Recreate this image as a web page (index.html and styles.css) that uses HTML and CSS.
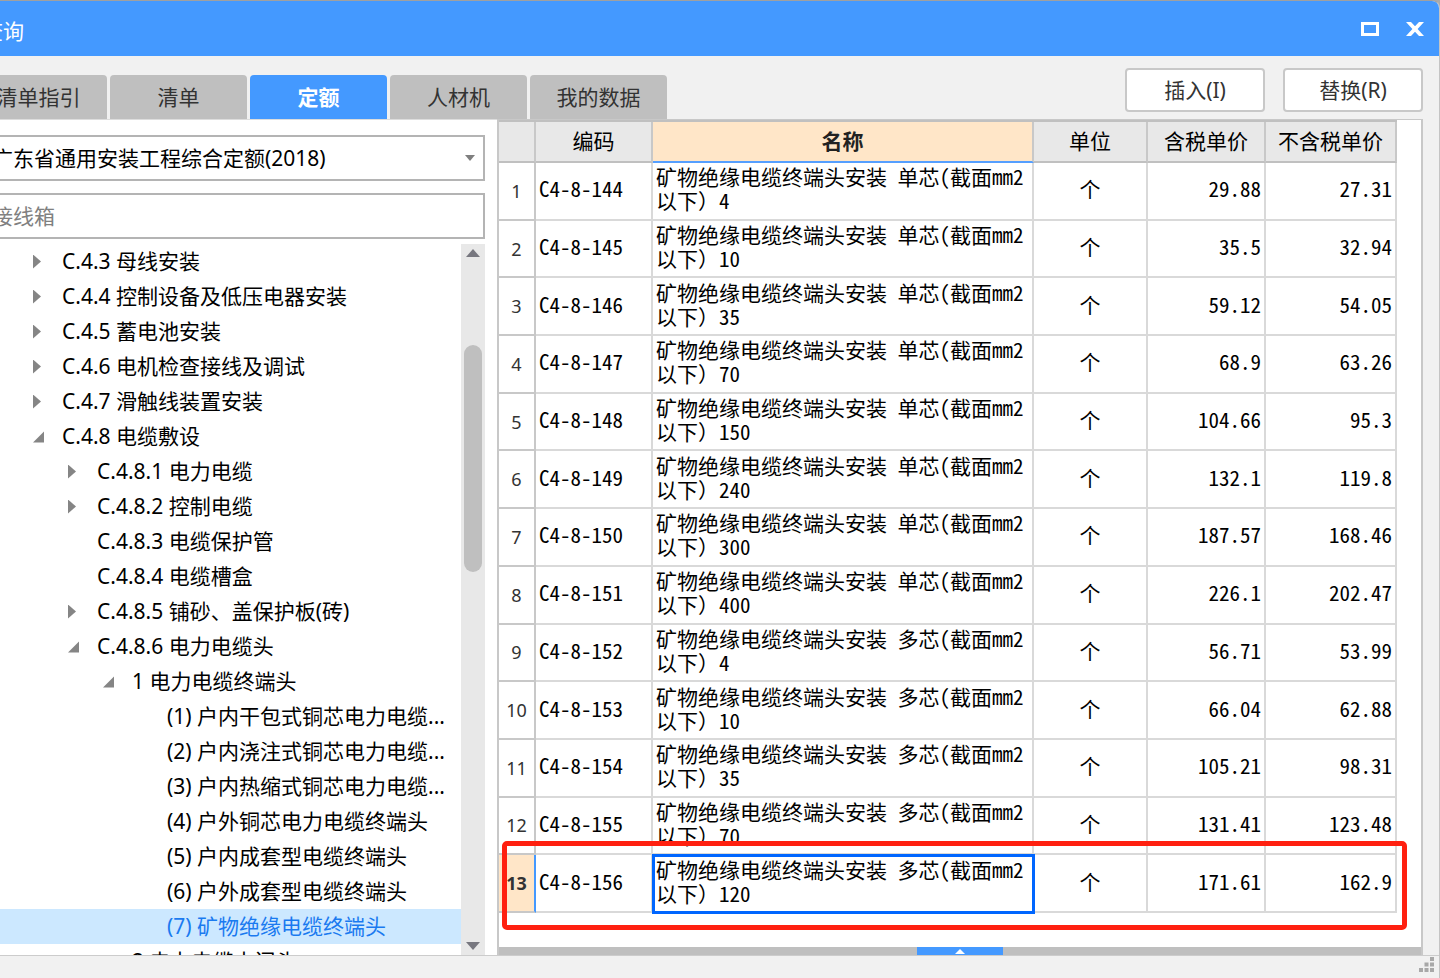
FILE: index.html
```html
<!DOCTYPE html>
<html lang="zh-CN">
<head>
  <meta charset="UTF-8">
  <meta name="viewport" content="width=device-width, initial-scale=1.0">
  <title>查询</title>
  <link rel="stylesheet" href="styles.css">
</head>
<body>
  <div class="query-window">
    <header class="title-bar">
      <h1>查询</h1>
      <div class="window-controls">
        <button type="button" aria-label="最大化">
          <svg width="18" height="14" viewBox="0 0 18 14"><rect x="1.5" y="1.5" width="15" height="11" fill="none" stroke="#fff" stroke-width="3"/></svg>
        </button>
        <button type="button" aria-label="关闭">
          <svg width="18" height="14" viewBox="0 0 18 14"><path d="M0 0H5L9 4.3L13 0H18L11.6 7L18 14H13L9 9.7L5 14H0L6.4 7Z" fill="#fff"/></svg>
        </button>
      </div>
    </header>

    <div class="toolbar">
      <nav class="tabs">
        <button type="button" class="tab">清单指引</button>
        <button type="button" class="tab">清单</button>
        <button type="button" class="tab active">定额</button>
        <button type="button" class="tab">人材机</button>
        <button type="button" class="tab">我的数据</button>
      </nav>
      <div class="actions">
        <button type="button" class="action-button">插入(I)</button>
        <button type="button" class="action-button">替换(R)</button>
      </div>
    </div>

    <main class="content">
      <aside class="sidebar">
        <div class="filters">
          <div class="select-box">
            <select aria-label="定额库">
              <option>广东省通用安装工程综合定额(2018)</option>
            </select>
            <svg class="select-arrow" width="10" height="6" viewBox="0 0 10 6"><path d="M0 0H10L5 6Z" fill="#7f7f7f"/></svg>
          </div>
          <input type="text" class="search-input" aria-label="搜索" placeholder="接线箱">
        </div>
        <div class="tree-box">
          <ul class="tree">
            <li class="level-1 closed">C.4.3 母线安装</li>
            <li class="level-1 closed">C.4.4 控制设备及低压电器安装</li>
            <li class="level-1 closed">C.4.5 蓄电池安装</li>
            <li class="level-1 closed">C.4.6 电机检查接线及调试</li>
            <li class="level-1 closed">C.4.7 滑触线装置安装</li>
            <li class="level-1 open">C.4.8 电缆敷设</li>
            <li class="level-2 closed">C.4.8.1 电力电缆</li>
            <li class="level-2 closed">C.4.8.2 控制电缆</li>
            <li class="level-2">C.4.8.3 电缆保护管</li>
            <li class="level-2">C.4.8.4 电缆槽盒</li>
            <li class="level-2 closed">C.4.8.5 铺砂、盖保护板(砖)</li>
            <li class="level-2 open">C.4.8.6 电力电缆头</li>
            <li class="level-3 open">1 电力电缆终端头</li>
            <li class="level-4">(1) 户内干包式铜芯电力电缆...</li>
            <li class="level-4">(2) 户内浇注式铜芯电力电缆...</li>
            <li class="level-4">(3) 户内热缩式铜芯电力电缆...</li>
            <li class="level-4">(4) 户外铜芯电力电缆终端头</li>
            <li class="level-4">(5) 户内成套型电缆终端头</li>
            <li class="level-4">(6) 户外成套型电缆终端头</li>
            <li class="level-4 selected">(7) 矿物绝缘电缆终端头</li>
            <li class="level-3">2 电力电缆中间头</li>
          </ul>
          <div class="scrollbar">
            <svg width="14" height="8" viewBox="0 0 14 8"><path d="M0 8L7 0L14 8Z" fill="#77777f"/></svg>
            <div class="scroll-track"><div class="scroll-thumb"></div></div>
            <svg width="14" height="8" viewBox="0 0 14 8"><path d="M0 0H14L7 8Z" fill="#77777f"/></svg>
          </div>
        </div>
      </aside>

      <section class="grid-panel">
        <div class="grid-box">
          <table class="quota-table">
            <colgroup>
              <col class="col-index">
              <col class="col-code">
              <col>
              <col class="col-unit">
              <col class="col-price">
              <col class="col-net">
            </colgroup>
            <thead>
              <tr><th></th><th>编码</th><th class="current">名称</th><th>单位</th><th>含税单价</th><th>不含税单价</th></tr>
            </thead>
            <tbody>
              <tr><td class="index">1</td><td class="code">C4-8-144</td><td>矿物绝缘电缆终端头安装<span class="half"> </span>单芯<span class="half">(</span>截面<span class="half">mm2</span><br>以下）<span class="half">4</span></td><td class="unit">个</td><td class="price">29.88</td><td class="price">27.31</td></tr>
              <tr><td class="index">2</td><td class="code">C4-8-145</td><td>矿物绝缘电缆终端头安装<span class="half"> </span>单芯<span class="half">(</span>截面<span class="half">mm2</span><br>以下）<span class="half">10</span></td><td class="unit">个</td><td class="price">35.5</td><td class="price">32.94</td></tr>
              <tr><td class="index">3</td><td class="code">C4-8-146</td><td>矿物绝缘电缆终端头安装<span class="half"> </span>单芯<span class="half">(</span>截面<span class="half">mm2</span><br>以下）<span class="half">35</span></td><td class="unit">个</td><td class="price">59.12</td><td class="price">54.05</td></tr>
              <tr><td class="index">4</td><td class="code">C4-8-147</td><td>矿物绝缘电缆终端头安装<span class="half"> </span>单芯<span class="half">(</span>截面<span class="half">mm2</span><br>以下）<span class="half">70</span></td><td class="unit">个</td><td class="price">68.9</td><td class="price">63.26</td></tr>
              <tr><td class="index">5</td><td class="code">C4-8-148</td><td>矿物绝缘电缆终端头安装<span class="half"> </span>单芯<span class="half">(</span>截面<span class="half">mm2</span><br>以下）<span class="half">150</span></td><td class="unit">个</td><td class="price">104.66</td><td class="price">95.3</td></tr>
              <tr><td class="index">6</td><td class="code">C4-8-149</td><td>矿物绝缘电缆终端头安装<span class="half"> </span>单芯<span class="half">(</span>截面<span class="half">mm2</span><br>以下）<span class="half">240</span></td><td class="unit">个</td><td class="price">132.1</td><td class="price">119.8</td></tr>
              <tr><td class="index">7</td><td class="code">C4-8-150</td><td>矿物绝缘电缆终端头安装<span class="half"> </span>单芯<span class="half">(</span>截面<span class="half">mm2</span><br>以下）<span class="half">300</span></td><td class="unit">个</td><td class="price">187.57</td><td class="price">168.46</td></tr>
              <tr><td class="index">8</td><td class="code">C4-8-151</td><td>矿物绝缘电缆终端头安装<span class="half"> </span>单芯<span class="half">(</span>截面<span class="half">mm2</span><br>以下）<span class="half">400</span></td><td class="unit">个</td><td class="price">226.1</td><td class="price">202.47</td></tr>
              <tr><td class="index">9</td><td class="code">C4-8-152</td><td>矿物绝缘电缆终端头安装<span class="half"> </span>多芯<span class="half">(</span>截面<span class="half">mm2</span><br>以下）<span class="half">4</span></td><td class="unit">个</td><td class="price">56.71</td><td class="price">53.99</td></tr>
              <tr><td class="index">10</td><td class="code">C4-8-153</td><td>矿物绝缘电缆终端头安装<span class="half"> </span>多芯<span class="half">(</span>截面<span class="half">mm2</span><br>以下）<span class="half">10</span></td><td class="unit">个</td><td class="price">66.04</td><td class="price">62.88</td></tr>
              <tr><td class="index">11</td><td class="code">C4-8-154</td><td>矿物绝缘电缆终端头安装<span class="half"> </span>多芯<span class="half">(</span>截面<span class="half">mm2</span><br>以下）<span class="half">35</span></td><td class="unit">个</td><td class="price">105.21</td><td class="price">98.31</td></tr>
              <tr><td class="index">12</td><td class="code">C4-8-155</td><td>矿物绝缘电缆终端头安装<span class="half"> </span>多芯<span class="half">(</span>截面<span class="half">mm2</span><br>以下）<span class="half">70</span></td><td class="unit">个</td><td class="price">131.41</td><td class="price">123.48</td></tr>
              <tr class="current-row"><td class="index">13</td><td class="code">C4-8-156</td><td class="current-cell">矿物绝缘电缆终端头安装<span class="half"> </span>多芯<span class="half">(</span>截面<span class="half">mm2</span><br>以下）<span class="half">120</span></td><td class="unit">个</td><td class="price">171.61</td><td class="price">162.9</td></tr>
            </tbody>
          </table>
          <div class="row-marker"></div>
        </div>
        <div class="splitter">
          <button type="button" class="splitter-handle" aria-label="展开">
            <svg width="10" height="5" viewBox="0 0 10 5"><path d="M0 5L5 0L10 5Z" fill="#fff"/></svg>
          </button>
        </div>
      </section>
    </main>

    <footer class="status-bar">
      <svg width="15" height="15" viewBox="0 0 15 15" fill="#a8a8a8"><path d="M11 0h4v4h-4zM5.500 5.500h4v4h-4zM11 5.500h4v4h-4zM0 11h4v4H0zM5.500 11h4v4h-4zM11 11h4v4h-4z"/></svg>
    </footer>
  </div>
</body>
</html>
```
FILE: styles.css
```css
* {
  box-sizing: border-box;
}

body {
  margin: 0;
  background-color: #a9a9a9;
  font-family: "Noto Sans", "Noto Sans CJK SC", sans-serif;
  font-size: 21px;
  color: #000;
}

button, select, input {
  font: inherit;
  color: inherit;
}

.query-window {
  display: flex;
  flex-direction: column;
  height: 100vh;
  overflow: hidden;
  border-top: 1px solid #a0a0a0;
  border-right: 1px solid #c4c4c4;
  border-radius: 0 8px 0 0;
  background-color: #f1f1f1;
}

.title-bar {
  display: flex;
  flex: none;
  justify-content: space-between;
  height: 55px;
  padding-right: 15px;
  background-color: #4499ff;
  color: #fff;
}

.title-bar h1 {
  margin: 0 0 0 -18px;
  padding-top: 5px;
  font-size: 21px;
  font-weight: 400;
  line-height: 50px;
}

.window-controls {
  display: flex;
  gap: 27px;
}

.window-controls button {
  display: flex;
  align-items: center;
  padding: 0;
  border: none;
  background: none;
}

.toolbar {
  display: flex;
  flex: none;
  justify-content: space-between;
  height: 63px;
  padding-right: 16px;
}

.tabs {
  display: flex;
  align-items: flex-end;
  gap: 3px;
  margin-left: -30px;
}

.tab {
  width: 137px;
  height: 44px;
  padding: 0 0 2px;
  border: none;
  border-radius: 4px 4px 0 0;
  background-color: #bfbfbf;
  color: #333;
}

.tab.active {
  background-color: #4499ff;
  color: #fff;
  font-weight: 700;
}

.actions {
  display: flex;
  gap: 18px;
  padding-top: 12px;
}

.action-button {
  width: 140px;
  height: 44px;
  padding: 0 0 2px;
  border: 2px solid #c8c8c8;
  border-radius: 4px;
  background-color: #fff;
  color: #333;
}

.content {
  display: flex;
  flex: 1;
  min-height: 0;
  padding-right: 16px;
}

.sidebar {
  display: flex;
  flex: none;
  flex-direction: column;
  width: 497px;
  padding-right: 12px;
  overflow: hidden;
  border-top: 1px solid #ddd;
  background-color: #fff;
}

.filters {
  display: flex;
  flex: none;
  flex-direction: column;
  gap: 12px;
  margin-left: -20px;
  padding: 15px 0 5px;
}

.select-box {
  position: relative;
}

.select-box select, .search-input {
  display: block;
  width: 100%;
  height: 46px;
  padding: 0 10px;
  border: 2px solid #b4b4b4;
  border-radius: 0;
  background-color: #fff;
}

.select-box select {
  appearance: none;
}

.select-arrow {
  position: absolute;
  top: 20px;
  right: 10px;
}

.search-input::placeholder {
  color: #808080;
}

.tree-box {
  display: flex;
  flex: 1;
  min-height: 0;
}

.tree {
  flex: 1;
  margin: 0;
  padding: 0;
  overflow: hidden;
  list-style: none;
}

.tree li {
  display: flex;
  align-items: center;
  height: 35px;
  line-height: 35px;
  white-space: nowrap;
}

.tree li::before {
  content: "";
  flex: none;
  width: 11px;
  height: 14px;
  margin-right: 18px;
}

.tree li.closed::before {
  background-color: #858585;
  clip-path: polygon(0 0, 8px 7px, 0 100%);
}

.tree li.open::before {
  background-color: #858585;
  clip-path: polygon(100% 2px, 100% 13px, 0 13px);
}

.level-1 {
  padding-left: 33px;
}

.level-2 {
  padding-left: 68px;
}

.level-3 {
  padding-left: 103px;
}

.level-4 {
  padding-left: 138px;
}

.tree li.selected {
  background-color: #cce8ff;
  color: #1a7af0;
}

.scrollbar {
  display: flex;
  flex: none;
  flex-direction: column;
  align-items: center;
  width: 24px;
  padding: 5px 0;
  background-color: #e8e8e8;
}

.scroll-track {
  flex: 1;
  width: 18px;
  padding-top: 88px;
}

.scroll-thumb {
  height: 38%;
  border-radius: 9px;
  background-color: #bfbfbf;
}

.grid-panel {
  display: flex;
  flex: 1;
  flex-direction: column;
  min-width: 0;
  border: 1px solid #c8c8c8;
  border-width: 1px 2px 0;
  background-color: #fff;
}

.grid-box {
  position: relative;
  flex: 1;
  min-height: 0;
  padding: 0 24px 34px 0;
}

.quota-table {
  width: 100%;
  height: 100%;
  table-layout: fixed;
  border-collapse: separate;
  border-spacing: 0;
  border-top: 2px solid #c0c0c0;
  font-family: "Noto Sans CJK SC", sans-serif;
}

.col-index {
  width: 37px;
}

.col-code {
  width: 117px;
}

.col-unit {
  width: 114px;
}

.col-price {
  width: 118px;
}

.col-net {
  width: 131px;
}

.quota-table th {
  height: 41px;
  padding: 0 0 3px;
  border-right: 2px solid #c8c8c8;
  border-bottom: 2px solid #c0c0c0;
  background-color: #e8e8e8;
  font-weight: 400;
  line-height: 24px;
  white-space: nowrap;
}

.quota-table th.current {
  border-bottom-color: #559fff;
  background-color: #ffe6c8;
  color: #222;
  font-weight: 700;
}

.quota-table td {
  padding: 0 3px 5px;
  border-right: 2px solid #d9d9d9;
  border-bottom: 2px solid #d9d9d9;
  line-height: 24px;
  white-space: nowrap;
}

/* half-width latin, two letters take the room of one hanzi */
.quota-table .half, .quota-table .code, .quota-table .price {
  font-feature-settings: "hwid";
}

.quota-table .half {
  white-space: pre;
}

.quota-table .index {
  padding: 0;
  border-color: #c8c8c8;
  color: #333;
  font-family: "Noto Sans", sans-serif;
  font-size: 18px;
  text-align: center;
}

.quota-table .unit {
  text-align: center;
}

.quota-table .price {
  text-align: right;
}

.current-row .index {
  border-right-color: #4499ff;
  background-color: #ffe6c8;
  font-weight: 700;
}

.quota-table .current-cell {
  outline: 3px solid #0066ff;
  outline-offset: -2px;
}

.row-marker {
  position: absolute;
  right: 14px;
  bottom: 17px;
  left: 3px;
  height: 89px;
  border: 5px solid #ff2010;
  border-radius: 5px;
  pointer-events: none;
}

.splitter {
  display: flex;
  flex: none;
  justify-content: center;
  height: 8px;
  background-color: #bfbfbf;
}

.splitter-handle {
  display: flex;
  align-items: center;
  justify-content: center;
  width: 86px;
  padding: 0;
  border: none;
  background-color: #4499ff;
}

.status-bar {
  display: flex;
  flex: none;
  align-items: flex-end;
  justify-content: flex-end;
  height: 23px;
  padding: 0 5px 6px 0;
  border-top: 1px solid #ccc;
}
```
